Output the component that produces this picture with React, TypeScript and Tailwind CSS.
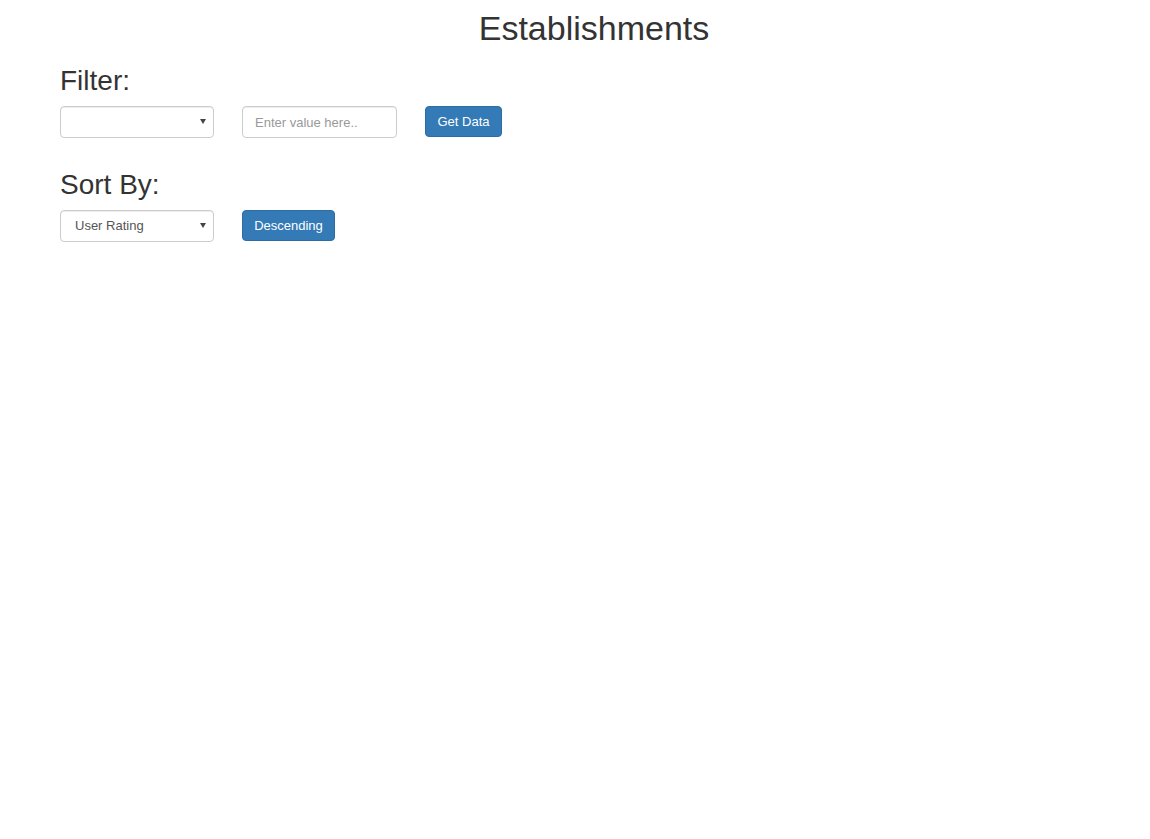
import React, { useState } from "react";

const font = "font-['Liberation_Sans',Arial,sans-serif]";

const Select = ({ value, options }: { value: string; options: string[] }) => (
  <div className="relative w-[154px] h-[32px]">
    <select
      defaultValue={value}
      className={`appearance-none w-full h-full rounded-[4px] border border-[#ccc] bg-white pl-[14px] pr-6 text-[13px] text-[#555] shadow-[inset_0_1px_1px_rgba(0,0,0,0.075)] outline-none ${font}`}
    >
      {options.map((o) => (
        <option key={o} value={o}>
          {o}
        </option>
      ))}
    </select>
    <span className="pointer-events-none absolute right-[8px] top-[13px] w-0 h-0 border-l-[3px] border-r-[3px] border-t-[5px] border-l-transparent border-r-transparent border-t-[#444]" />
  </div>
);

const Button = ({ children, w }: { children: React.ReactNode; w: string }) => (
  <button
    className={`${w} h-[31px] rounded-[4px] border border-[#2e6da4] bg-[#337ab7] text-white text-[13px] ${font}`}
  >
    {children}
  </button>
);

export default function App() {
  const [query, setQuery] = useState("");
  return (
    <div className={`min-h-[839px] bg-white text-[#333] ${font}`}>
      <h1 className="pt-[10px] pl-[38px] text-center text-[34px] leading-[1.1]">Establishments</h1>

      <div className="px-[60px]">
        <h2 className="mt-[19px] text-[28px] leading-[1.1]">Filter:</h2>
        <div className="mt-[9px] flex items-start gap-[28px]">
          <Select value="" options={["", "Name", "Cuisine", "Borough"]} />
          <input
            value={query}
            onChange={(e) => setQuery(e.target.value)}
            placeholder="Enter value here.."
            className={`w-[155px] h-[32px] rounded-[4px] border border-[#ccc] px-[12px] text-[13px] text-[#555] placeholder:text-[#999] outline-none shadow-[inset_0_1px_1px_rgba(0,0,0,0.075)] ${font}`}
          />
          <Button w="w-[77px]">Get Data</Button>
        </div>

        <h2 className="mt-[32px] text-[28px] leading-[1.1]">Sort By:</h2>
        <div className="mt-[9px] flex items-start gap-[28px]">
          <Select value="User Rating" options={["User Rating", "Name", "Distance"]} />
          <Button w="w-[93px]">Descending</Button>
        </div>
      </div>
    </div>
  );
}
